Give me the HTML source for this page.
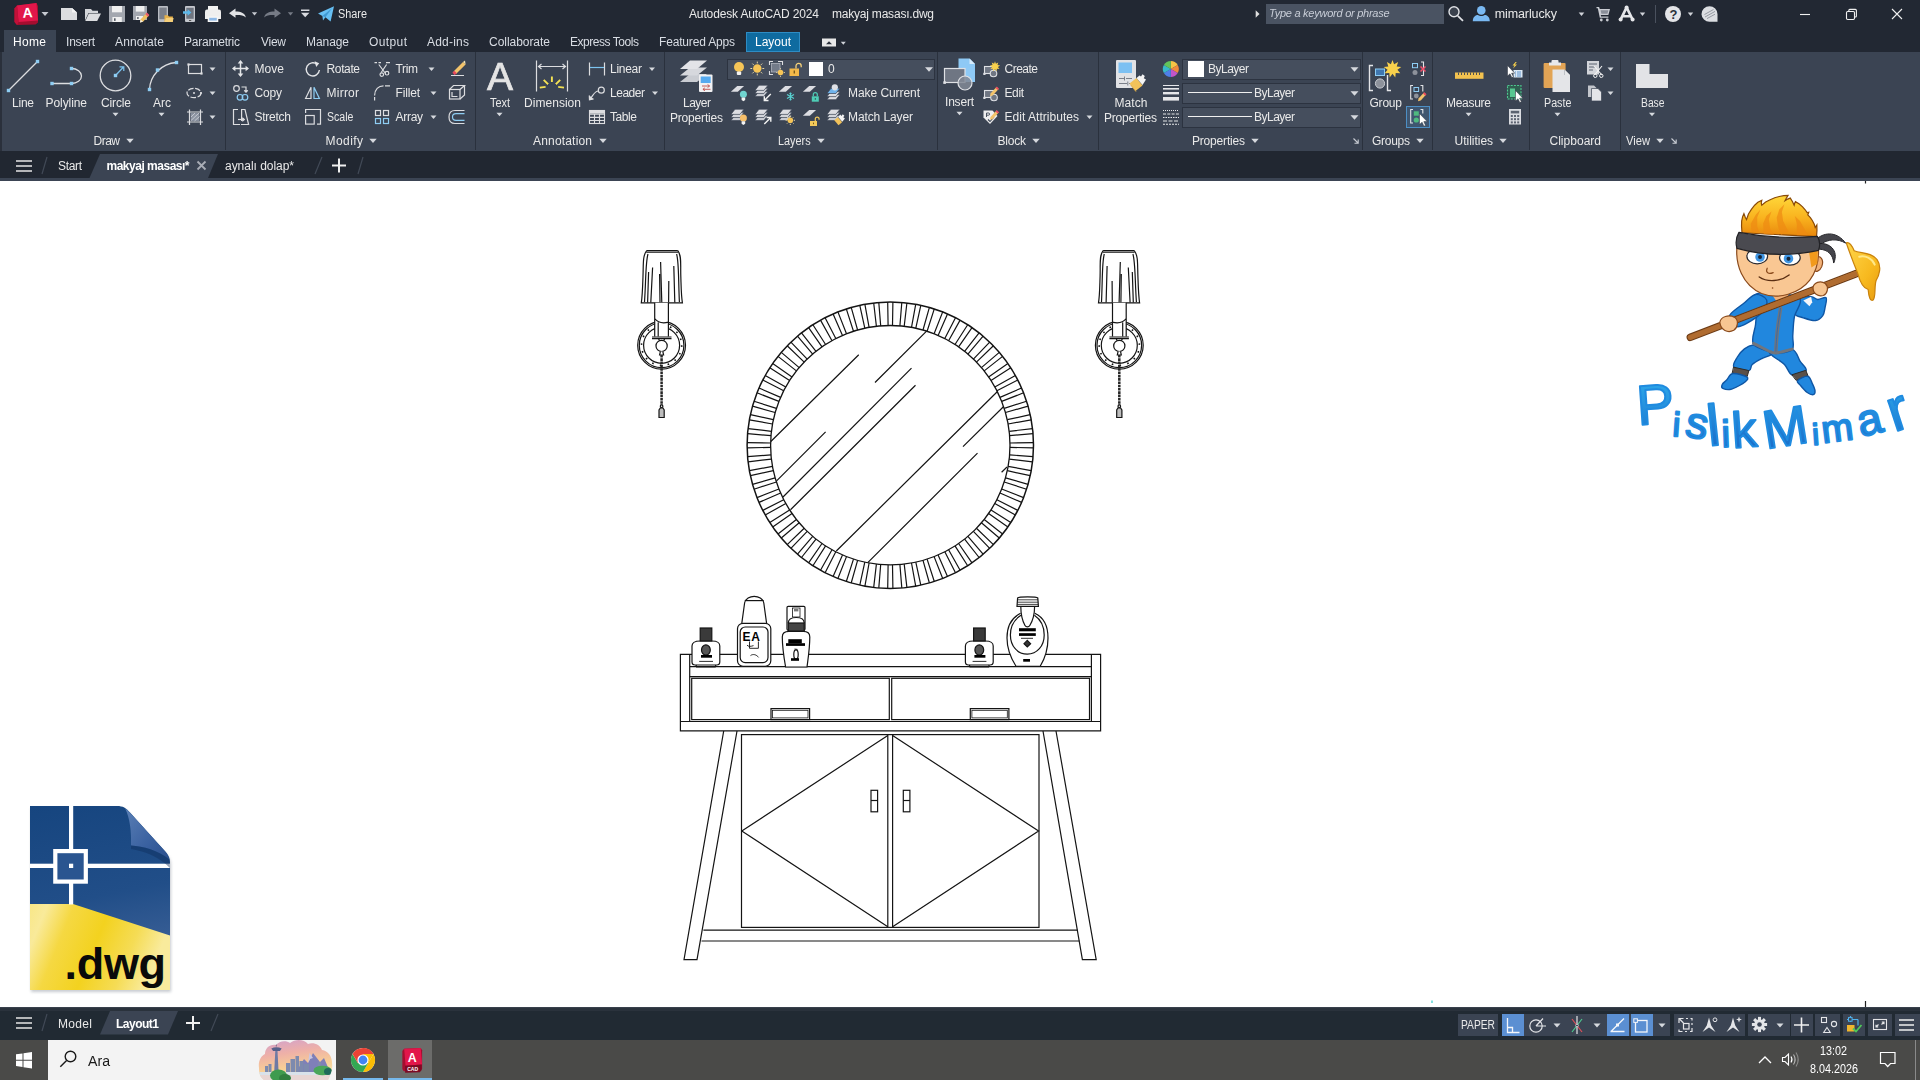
<!DOCTYPE html>
<html lang="tr">
<head>
<meta charset="utf-8">
<title>Autodesk AutoCAD 2024 - makyaj masası.dwg</title>
<style>
html,body{margin:0;padding:0;width:1920px;height:1080px;overflow:hidden;background:#fff;}
body{font-family:"Liberation Sans",sans-serif;font-size:12px;color:#e8e8e8;position:relative;}
.abs{position:absolute;}
#titlebar{position:absolute;left:0;top:0;width:1920px;height:30px;background:#222833;}
#tabrow{position:absolute;left:0;top:30px;width:1920px;height:22px;background:#222833;}
#ribbon{position:absolute;left:0;top:52px;width:1920px;height:99px;background:#3b4453;}
#filetabs{position:absolute;left:0;top:151px;width:1920px;height:27px;background:#212731;}
#filetabs-line{position:absolute;left:0;top:178px;width:1920px;height:3px;background:#3b4453;}
#canvas{position:absolute;left:0;top:181px;width:1920px;height:826px;background:#fff;}
#layoutbar{position:absolute;left:0;top:1007px;width:1920px;height:33px;background:#212a33;}
#taskbar{position:absolute;left:0;top:1040px;width:1920px;height:40px;background:#4a4a48;}
.t{position:absolute;white-space:nowrap;line-height:1;color:#e9e9e9;font-size:12px;}
.b{font-weight:bold;}
#texts{position:absolute;left:0;top:0;width:1920px;height:1080px;will-change:transform;}
.sep{position:absolute;top:52px;width:1px;height:98px;background:#2a313d;}
.dd{position:absolute;background:#454e5d;border:1px solid #2c3340;box-sizing:border-box;}
svg{position:absolute;left:0;top:0;overflow:visible;}
</style>
</head>
<body>
<div id="titlebar"></div>
<div id="tabrow"></div>
<div id="ribbon"></div>
<div id="filetabs"></div>
<div id="filetabs-line"></div>
<div id="canvas"></div>
<div id="layoutbar"></div>
<div id="taskbar"></div>
<!-- structural chrome shapes -->
<div class="abs" style="left:4px;top:30px;width:52px;height:22px;background:#3b4453;"></div>
<div class="abs" style="left:746px;top:32px;width:54px;height:20px;background:#0f6ba0;border:1px solid #2e8cc4;box-sizing:border-box;"></div>
<div class="abs" style="left:1266px;top:4px;width:178px;height:20px;background:#4a5362;"></div>
<div class="abs" style="left:0;top:52px;width:2px;height:99px;background:#2a303b;"></div>
<div class="sep" style="left:225px;"></div>
<div class="sep" style="left:475px;"></div>
<div class="sep" style="left:664px;"></div>
<div class="sep" style="left:937px;"></div>
<div class="sep" style="left:1098px;"></div>
<div class="sep" style="left:1362px;"></div>
<div class="sep" style="left:1432px;"></div>
<div class="sep" style="left:1529px;"></div>
<div class="sep" style="left:1620px;"></div>
<!-- dropdowns -->
<div class="dd" style="left:727px;top:59px;width:208px;height:21px;"></div>
<div class="dd" style="left:1182px;top:59px;width:179px;height:21px;"></div>
<div class="dd" style="left:1182px;top:83px;width:179px;height:21px;"></div>
<div class="dd" style="left:1182px;top:107px;width:179px;height:21px;"></div>
<div class="abs" style="left:809px;top:62px;width:14px;height:14px;background:#fff;"></div>
<div class="abs" style="left:1188px;top:61px;width:16px;height:16px;background:#fff;"></div>
<div class="abs" style="left:1188px;top:92px;width:64px;height:1px;background:#f0f0f0;"></div>
<div class="abs" style="left:1188px;top:116px;width:64px;height:1px;background:#f0f0f0;"></div>
<!-- group-select highlighted button -->
<div class="abs" style="left:1406px;top:106px;width:24px;height:22px;background:#3f5670;border:1px solid #4d8fc4;box-sizing:border-box;"></div>
<!-- status bar boxes -->
<div class="abs" style="left:1458px;top:1014px;width:40px;height:22px;background:#3b4453;"></div>
<div class="abs" style="left:1502px;top:1014px;width:168px;height:22px;background:#3b4453;"></div>
<div class="abs" style="left:1502px;top:1014px;width:22px;height:22px;background:#5b8fd2;"></div>
<div class="abs" style="left:1607px;top:1014px;width:22px;height:22px;background:#5b8fd2;"></div>
<div class="abs" style="left:1631px;top:1014px;width:22px;height:22px;background:#5b8fd2;"></div>
<div class="abs" style="left:1674px;top:1014px;width:71px;height:22px;background:#3b4453;"></div>
<div class="abs" style="left:1748px;top:1014px;width:42px;height:22px;background:#3b4453;"></div>
<div class="abs" style="left:1791px;top:1014px;width:22px;height:22px;background:#3b4453;"></div>
<div class="abs" style="left:1815px;top:1014px;width:25px;height:22px;background:#3b4453;"></div>
<div class="abs" style="left:1843px;top:1014px;width:22px;height:22px;background:#3b4453;"></div>
<div class="abs" style="left:1868px;top:1014px;width:24px;height:22px;background:#3b4453;"></div>
<div class="abs" style="left:1895px;top:1014px;width:25px;height:22px;background:#3b4453;"></div>
<!-- taskbar -->
<div class="abs" style="left:48px;top:1040px;width:288px;height:40px;background:#f3f3f3;"></div>
<div class="abs" style="left:388px;top:1040px;width:44px;height:40px;background:#6c6c6a;"></div>
<div class="abs" style="left:343px;top:1078px;width:40px;height:2px;background:#76b9ed;"></div>
<div class="abs" style="left:388px;top:1078px;width:44px;height:2px;background:#76b9ed;"></div>
<div class="abs" style="left:1915px;top:1040px;width:1px;height:40px;background:#8a8a8a;"></div>
<!-- file tab / layout tab polygons & misc lines -->
<svg width="1920" height="1080" viewBox="0 0 1920 1080">
<polygon points="89.5,178 100,154 218,154 208,178" fill="#3b4453"/>
<polygon points="100,1034.5 110,1011 178,1011 168,1034.5" fill="#3b4453"/>
<rect x="0" y="1007" width="1920" height="1.5" fill="#39414c"/><rect x="0" y="1008.5" width="1920" height="2.5" fill="#2a323c"/>
<!-- hamburger top -->
<g stroke="#e6e6e6" stroke-width="1.6">
<path d="M16 161h16M16 166h16M16 171h16"/>
<path d="M16 1018h16M16 1023h16M16 1028h16"/>
</g>
<g stroke="#414956" stroke-width="1.2">
<path d="M47 157L42 174M322 157L315 174M363 157L358 174"/>
<path d="M47 1014L42 1031M218 1014L211 1031"/>
</g>
<g stroke="#f0f0f0" stroke-width="2">
<path d="M332 165.5h14M339 158.5v14"/>
<path d="M186 1023h14M193 1016v14"/>
</g>
<path d="M197.5 161.5l8 8M205.5 161.5l-8 8" stroke="#a9adb6" stroke-width="1.8"/>
</svg>
<!-- CAD drawing: makyaj masası -->
<svg width="1920" height="1080" viewBox="0 0 1920 1080" fill="none" stroke="#141414" stroke-width="1.2" stroke-linecap="butt">
<g id="mirror">
<circle cx="890.3" cy="445.2" r="143.2" stroke-width="1.5"/><circle cx="890.3" cy="445.2" r="119.7" stroke-width="1.3"/>
<path d="M1010.0 443.0L1033.5 442.6M1010.0 447.4L1033.5 447.8M1009.6 454.8L1033.0 456.7M1009.2 459.1L1032.5 461.8M1008.1 466.4L1031.2 470.6M1007.3 470.7L1030.2 475.7M1005.5 477.9L1028.1 484.3M1004.2 482.0L1026.6 489.2M1001.7 489.0L1023.6 497.6M1000.0 493.0L1021.6 502.4M996.9 499.7L1017.8 510.4M994.8 503.5L1015.4 515.0M991.0 509.9L1010.8 522.6M988.6 513.5L1007.9 526.9M984.2 519.5L1002.6 534.0M981.4 522.8L999.3 538.0M976.4 528.3L993.4 544.6M973.4 531.3L989.7 548.3M967.9 536.3L983.1 554.2M964.6 539.1L979.1 557.5M958.6 543.5L972.0 562.8M955.0 545.9L967.7 565.7M948.6 549.7L960.1 570.3M944.8 551.8L955.5 572.7M938.1 554.9L947.5 576.5M934.1 556.6L942.7 578.5M927.1 559.1L934.3 581.5M923.0 560.4L929.4 583.0M915.8 562.2L920.8 585.1M911.5 563.0L915.7 586.1M904.2 564.1L906.9 587.4M899.9 564.5L901.8 587.9M892.5 564.9L892.9 588.4M888.1 564.9L887.7 588.4M880.7 564.5L878.8 587.9M876.4 564.1L873.7 587.4M869.1 563.0L864.9 586.1M864.8 562.2L859.8 585.1M857.6 560.4L851.2 583.0M853.5 559.1L846.3 581.5M846.5 556.6L837.9 578.5M842.5 554.9L833.1 576.5M835.8 551.8L825.1 572.7M832.0 549.7L820.5 570.3M825.6 545.9L812.9 565.7M822.0 543.5L808.6 562.8M816.0 539.1L801.5 557.5M812.7 536.3L797.5 554.2M807.2 531.3L790.9 548.3M804.2 528.3L787.2 544.6M799.2 522.8L781.3 538.0M796.4 519.5L778.0 534.0M792.0 513.5L772.7 526.9M789.6 509.9L769.8 522.6M785.8 503.5L765.2 515.0M783.7 499.7L762.8 510.4M780.6 493.0L759.0 502.4M778.9 489.0L757.0 497.6M776.4 482.0L754.0 489.2M775.1 477.9L752.5 484.3M773.3 470.7L750.4 475.7M772.5 466.4L749.4 470.6M771.4 459.1L748.1 461.8M771.0 454.8L747.6 456.7M770.6 447.4L747.1 447.8M770.6 443.0L747.1 442.6M771.0 435.6L747.6 433.7M771.4 431.3L748.1 428.6M772.5 424.0L749.4 419.8M773.3 419.7L750.4 414.7M775.1 412.5L752.5 406.1M776.4 408.4L754.0 401.2M778.9 401.4L757.0 392.8M780.6 397.4L759.0 388.0M783.7 390.7L762.8 380.0M785.8 386.9L765.2 375.4M789.6 380.5L769.8 367.8M792.0 376.9L772.7 363.5M796.4 370.9L778.0 356.4M799.2 367.6L781.3 352.4M804.2 362.1L787.2 345.8M807.2 359.1L790.9 342.1M812.7 354.1L797.5 336.2M816.0 351.3L801.5 332.9M822.0 346.9L808.6 327.6M825.6 344.5L812.9 324.7M832.0 340.7L820.5 320.1M835.8 338.6L825.1 317.7M842.5 335.5L833.1 313.9M846.5 333.8L837.9 311.9M853.5 331.3L846.3 308.9M857.6 330.0L851.2 307.4M864.8 328.2L859.8 305.3M869.1 327.4L864.9 304.3M876.4 326.3L873.7 303.0M880.7 325.9L878.8 302.5M888.1 325.5L887.7 302.0M892.5 325.5L892.9 302.0M899.9 325.9L901.8 302.5M904.2 326.3L906.9 303.0M911.5 327.4L915.7 304.3M915.8 328.2L920.8 305.3M923.0 330.0L929.4 307.4M927.1 331.3L934.3 308.9M934.1 333.8L942.7 311.9M938.1 335.5L947.5 313.9M944.8 338.6L955.5 317.7M948.6 340.7L960.1 320.1M955.0 344.5L967.7 324.7M958.6 346.9L972.0 327.6M964.6 351.3L979.1 332.9M967.9 354.1L983.1 336.2M973.4 359.1L989.7 342.1M976.4 362.1L993.4 345.8M981.4 367.6L999.3 352.4M984.2 370.9L1002.6 356.4M988.6 376.9L1007.9 363.5M991.0 380.5L1010.8 367.8M994.8 386.9L1015.4 375.4M996.9 390.7L1017.8 380.0M1000.0 397.4L1021.6 388.0M1001.7 401.4L1023.6 392.8M1004.2 408.4L1026.6 401.2M1005.5 412.5L1028.1 406.1M1007.3 419.7L1030.2 414.7M1008.1 424.0L1031.2 419.8M1009.2 431.3L1032.5 428.6M1009.6 435.6L1033.0 433.7"/>
<path d="M770.8 441.5L858.75 354.7M875 382.5L926.6 331.1M776.6 480.9L825.6 431.8M783 497L911.5 368.1M790.5 509.8L915.5 385.3M836.3 551L997.2 391.8M963 446.6L1003.4 406.8M868 562.4L977.5 453.1M1001.6 472.3L1007 467"/>
</g>
<g id="sconce-l"><path d="M646.7 250.5H677.8M646.2 252.2H678.3" /><path d="M646.7 250.5C642.5 256 643.5 264 643 276C642.6 288 642.4 296 641.3 302.8H682.4C681.2 296 681.2 288 680.8 276C680.4 264 681.8 256 677.8 250.5"/><path d="M648 254C645.5 262 646 280 644.5 302M676.6 254C679 262 678.3 280 679.4 302"/><path d="M648.6 272L647.6 302.5M652.6 267.5L650.8 302.5M660.6 262L661.8 302.5M659.6 274L660 302.5M668.8 281L668.6 302.5M673.8 266L674.8 302.5"/><circle cx="661.6" cy="345.3" r="23.9"/><circle cx="661.6" cy="345.3" r="22.3"/><circle cx="661.6" cy="345.3" r="18"/><circle cx="661.6" cy="345.3" r="20.1" stroke-dasharray="1.6 6.3" stroke-width="1.6"/><path d="M654.7 302.8V336.5H668.4V302.8Z" fill="#fff" stroke="none"/><path d="M654.7 302.8V336.5M668.4 302.8V336.5M658.2 322.5V336.5M654.7 318.5C657 321.5 662 323.8 668.4 322.2"/><path d="M652 337H671.5M652 338.6H671.5" /><path d="M658.5 338.6L659.6 341H663.6L664.7 338.6" /><circle cx="661.6" cy="345.9" r="5.6" fill="#fff"/><path d="M660.4 351.4L659.6 355H663.6L662.8 351.4" fill="#fff"/><path d="M661.6 355V405" stroke-width="2.5" stroke-dasharray="2.6 0.7" stroke="#262626"/><circle cx="661.6" cy="406.2" r="1.3"/><path d="M659 417.5V410L660.4 407.8H662.8L664.2 410V417.5Z" fill="#bdbdbd"/></g>
<g id="sconce-r" transform="translate(1780.9 0) scale(-1 1)"><path d="M646.7 250.5H677.8M646.2 252.2H678.3" /><path d="M646.7 250.5C642.5 256 643.5 264 643 276C642.6 288 642.4 296 641.3 302.8H682.4C681.2 296 681.2 288 680.8 276C680.4 264 681.8 256 677.8 250.5"/><path d="M648 254C645.5 262 646 280 644.5 302M676.6 254C679 262 678.3 280 679.4 302"/><path d="M648.6 272L647.6 302.5M652.6 267.5L650.8 302.5M660.6 262L661.8 302.5M659.6 274L660 302.5M668.8 281L668.6 302.5M673.8 266L674.8 302.5"/><circle cx="661.6" cy="345.3" r="23.9"/><circle cx="661.6" cy="345.3" r="22.3"/><circle cx="661.6" cy="345.3" r="18"/><circle cx="661.6" cy="345.3" r="20.1" stroke-dasharray="1.6 6.3" stroke-width="1.6"/><path d="M654.7 302.8V336.5H668.4V302.8Z" fill="#fff" stroke="none"/><path d="M654.7 302.8V336.5M668.4 302.8V336.5M658.2 322.5V336.5M654.7 318.5C657 321.5 662 323.8 668.4 322.2"/><path d="M652 337H671.5M652 338.6H671.5" /><path d="M658.5 338.6L659.6 341H663.6L664.7 338.6" /><circle cx="661.6" cy="345.9" r="5.6" fill="#fff"/><path d="M660.4 351.4L659.6 355H663.6L662.8 351.4" fill="#fff"/><path d="M661.6 355V405" stroke-width="2.5" stroke-dasharray="2.6 0.7" stroke="#262626"/><circle cx="661.6" cy="406.2" r="1.3"/><path d="M659 417.5V410L660.4 407.8H662.8L664.2 410V417.5Z" fill="#bdbdbd"/></g>
<g id="table">
<path d="M680.4 654.3H1100.6V730.8H680.4Z"/>
<path d="M689.7 654.3V721.4M1091.4 654.3V721.4M689.7 666.7H1091.4M680.4 721.5H1100.6"/>
<path d="M689.7 676.7H1091.4"/>
<rect x="691.7" y="678.3" width="197.6" height="41.3"/><rect x="891.7" y="678.3" width="197.8" height="41.3"/>
<rect x="771" y="708.6" width="38.6" height="11"/><rect x="772.6" y="710.3" width="35.4" height="7.6" stroke-width="0.8"/>
<rect x="970.3" y="708.6" width="38.6" height="11"/><rect x="971.9" y="710.3" width="35.4" height="7.6" stroke-width="0.8"/>
<path d="M723.7 731L684 959.6H697L737 731M1056 731L1096.2 959.6H1082.4L1043 731"/>
<rect x="741.5" y="734.6" width="297.5" height="192.8"/>
<path d="M887.8 734.8V927.4M892.6 734.8V927.4"/>
<path d="M887.8 735.5L741.8 831L887.8 926.8M892.6 735.5L1038.6 831L892.6 926.8"/>
<rect x="871" y="790.3" width="6.6" height="21.5"/><path d="M871 800.5H877.6"/>
<rect x="903.3" y="790.3" width="6.6" height="21.5"/><path d="M903.3 800.5H909.9"/>
<path d="M703.4 930.2H1077.6M701.5 941H1079.5"/>
</g>
<g id="bottles">
<path d="M692 646C692 642.5 694 641 700.2 641H711.8C718 641 719.8 642.5 719.8 646V662C719.8 664 718.6 665 716.6 665H695.2C693.2 665 692 664 692 662Z" fill="#fff"/><path d="M696 665L696.6 667H715.2L715.8 665"/><rect x="700.2" y="628" width="11.6" height="13" fill="#3a3a3a"/><ellipse cx="705.9" cy="650" rx="4.4" ry="5.2" fill="#555"/><rect x="701" y="655" width="11" height="2.7" fill="#000" stroke="none"/><path d="M699.2 661.4H713" stroke-width="0.9"/>
<path d="M965.4 646C965.4 642.5 967.4 641 973.6 641H985.1999999999999C991.4 641 993.1999999999999 642.5 993.1999999999999 646V662C993.1999999999999 664 992.0 665 990.0 665H968.6C966.6 665 965.4 664 965.4 662Z" fill="#fff"/><path d="M969.4 665L970.0 667H988.6L989.1999999999999 665"/><rect x="973.6" y="628" width="11.6" height="13" fill="#3a3a3a"/><ellipse cx="979.3" cy="650" rx="4.4" ry="5.2" fill="#555"/><rect x="974.4" y="655" width="11" height="2.7" fill="#000" stroke="none"/><path d="M972.6 661.4H986.4" stroke-width="0.9"/>
<path d="M741.8 623.3L744.6 603C745.4 598.5 750 596.3 754.2 596.3C758.4 596.3 763 598.5 763.8 603L766.6 623.3" fill="#fff"/>
<path d="M744.8 600.6H763.6"/>
<rect x="737.5" y="623.3" width="33.3" height="43" rx="5.5" fill="#fff"/>
<rect x="740.2" y="627" width="27.8" height="35.6" rx="5"/>
<path d="M749.5 641.5V648.3H758.4V641.5M747 645.2C748.5 646.8 751 646.5 753.5 645.6M750.5 655.6C753 653.6 756.5 654.6 758.6 657.4" stroke-width="0.9"/>
<rect x="787" y="606.3" width="18" height="24" rx="1.2" fill="#fff"/>
<rect x="792.5" y="608" width="7.5" height="9" stroke-width="0.8"/><rect x="794" y="609" width="4.4" height="2.4" fill="#777" stroke="none"/>
<path d="M788.3 623C788.3 619.5 791.5 617.5 796.2 617.5C800.9 617.5 804.2 619.5 804.2 623" />
<rect x="788.3" y="623" width="15.9" height="8.3" fill="#444"/>
<path d="M782.3 637C782.3 633.5 785 631.3 789 631.3H803.2C807.2 631.3 809.8 633.5 809.8 637C809.8 648 808.2 658 807 667H785.6C784 658 782.3 648 782.3 637Z" fill="#fff"/>
<rect x="788.3" y="639.2" width="13.5" height="4.2" fill="#000" stroke="none"/><rect x="786" y="643.2" width="19" height="2.7" fill="#000" stroke="none"/>
<ellipse cx="796" cy="654.5" rx="2.2" ry="4.6" stroke-width="1.2"/><path d="M794.5 649L797.5 649.4" stroke-width="0.8"/>
<rect x="791" y="658.2" width="8" height="2.6" fill="#000" stroke="none"/>
<path d="M1020.6 613.3C1011 618 1007 628 1007 638C1007 650 1012 660 1016 666.3H1040.2C1044 660 1048 650 1048 638C1048 628 1045 618 1034.8 613.3" fill="#fff"/>
<path d="M1021 615.2C1013.5 620 1010.4 628 1010.4 635C1010.4 646 1017.5 654.2 1027.3 654.2C1037 654.2 1044.2 646 1044.2 635C1044.2 628 1041.5 620 1034.4 615.2"/>
<path d="M1020.8 606.3C1020.8 616 1023 622 1025 625.5C1026 627.3 1028.8 627.3 1029.8 625.5C1032 622 1034.6 616 1034.6 606.3" fill="#fff"/>
<path d="M1017.6 598C1019 596.6 1036.4 596.6 1037.8 598L1038.4 606.3H1017Z" fill="#fff"/><path d="M1017.4 599.8H1038M1017.3 602.2H1038.2M1017.2 604.4H1038.3" stroke-width="0.8"/>
<rect x="1019" y="628.2" width="16.8" height="3.1" fill="#000" stroke="none"/><rect x="1019" y="633.2" width="16.8" height="2.7" fill="#000" stroke="none"/>
<path d="M1021 638.3H1033" stroke-width="0.9"/><path d="M1027.3 640.4L1030.6 643.7L1027.3 647L1024 643.7Z" fill="#333"/>
<rect x="1023.2" y="659" width="6.8" height="2.7" fill="#000" stroke="none"/>
</g>
<text x="742.6" y="641.4" font-family="Liberation Sans, sans-serif" font-weight="bold" font-size="12" fill="#000" stroke="none" letter-spacing="0.6">EA</text>
<path d="M1865.5 181V183.5M1865.5 1001V1007" stroke="#222"/><path d="M1432 1000.5V1003" stroke="#3cc" />
</svg>
<!-- .dwg file icon -->
<svg width="1920" height="1080" viewBox="0 0 1920 1080">
<defs>
<linearGradient id="dwgBlue" x1="0" y1="0" x2="0.150" y2="1"><stop offset="0" stop-color="#16457f"/><stop offset="0.550" stop-color="#214e88"/><stop offset="1" stop-color="#42659b"/></linearGradient>
<linearGradient id="dwgYel" x1="0" y1="0" x2="1" y2="0.250"><stop offset="0" stop-color="#f8e787"/><stop offset="0.120" stop-color="#f9ea9a"/><stop offset="0.300" stop-color="#f5d842"/><stop offset="0.550" stop-color="#f3d21f"/><stop offset="0.800" stop-color="#f5dc55"/><stop offset="1" stop-color="#f9eb9c"/></linearGradient>
<linearGradient id="dwgFold" x1="0" y1="0" x2="1" y2="1"><stop offset="0" stop-color="#5a7fb5"/><stop offset="0.600" stop-color="#3a61a0"/><stop offset="1" stop-color="#2a4f8c"/></linearGradient>
<filter id="dwgSh" x="-10%" y="-10%" width="120%" height="120%"><feGaussianBlur stdDeviation="1.800"/></filter>
<clipPath id="dwgClip"><path d="M30 806H117C123 806 126 808 130 812.500L164 850C168 854.500 170 857 170 863V990H30Z"/></clipPath>
</defs>
<path d="M31 808H117C123 808 126 810 130 814.500L164 852C168 856.500 171 859 171 865V992H31Z" fill="#9aa0aa" opacity="0.550" filter="url(#dwgSh)"/>
<g clip-path="url(#dwgClip)">
<rect x="30" y="806" width="140" height="184" fill="url(#dwgBlue)"/>
<path d="M30 904H73L170 935.500V990H30Z" fill="url(#dwgYel)"/>
<rect x="69" y="806" width="4.200" height="98.500" fill="#fff"/>
<rect x="30" y="863.700" width="140" height="4.300" fill="#fff"/>
<rect x="55.300" y="851.100" width="30.500" height="30.500" fill="#2a5590" stroke="#fff" stroke-width="4.200"/>
<rect x="69" y="863.700" width="4.200" height="4.300" fill="#fff"/>
<path d="M125 808C130 818 131.500 832 131 845.500C143 846.500 158 850 169.500 859.500C168 855 166 852.500 164 850L130 812.500C128.500 811 127 809.500 125 808Z" fill="url(#dwgFold)"/>
<path d="M131 845.500C143 846.500 158 850 169.500 859.500L170 868C158 856 144 851 131 849Z" fill="#0f2f5e" opacity="0.450"/>
</g>
<text x="64.500" y="978.700" font-family="Liberation Sans, sans-serif" font-weight="bold" font-size="45" letter-spacing="-0.300" fill="#0a0a0a">.dwg</text>
</svg>
<!-- Pislik Mimar mascot logo -->
<svg width="1920" height="1080" viewBox="0 0 1920 1080">
<defs>
<linearGradient id="hairG" x1="0" y1="0" x2="0" y2="1"><stop offset="0" stop-color="#ffd83a"/><stop offset="0.550" stop-color="#f9b21e"/><stop offset="1" stop-color="#e8860c"/></linearGradient>
<linearGradient id="blobG" x1="0" y1="0" x2="1" y2="1"><stop offset="0" stop-color="#ffd64a"/><stop offset="0.600" stop-color="#f7b91f"/><stop offset="1" stop-color="#e79a10"/></linearGradient>
<linearGradient id="txtG" x1="0" y1="0" x2="0" y2="1"><stop offset="0" stop-color="#2fb0ee"/><stop offset="1" stop-color="#1763c4"/></linearGradient>
<linearGradient id="stickG" x1="0" y1="0" x2="0" y2="1"><stop offset="0" stop-color="#c07a3a"/><stop offset="1" stop-color="#8a4f20"/></linearGradient>
</defs>
<g transform="translate(1680 185) scale(0.19909)" stroke-linejoin="round" stroke-linecap="round">
<!-- body (legs, arms, torso) -->
<path d="M368.3 803.7C346.0 805.6 337.2 813.0 323.7 823.2C310.2 833.4 296.2 849.8 287.4 865.1C278.6 880.5 260.9 904.1 270.7 915.3C280.5 926.5 330.6 934.4 346.0 932.1C361.4 929.8 351.6 911.6 362.8 901.4C374.0 891.2 396.3 879.6 413.0 870.7C429.7 861.9 455.8 858.1 463.2 848.3C470.6 838.5 473.4 819.5 457.6 812.1C441.8 804.7 390.6 801.9 368.3 803.7Z" fill="#2187de" stroke="#0f56a4" stroke-width="7"/>
<path d="M457.6 834.4C474.4 829.3 539.5 817.6 563.7 826.0C587.9 834.4 591.2 866.9 602.8 884.6C614.4 902.3 639.9 920.5 633.4 932.1C626.9 943.7 581.8 959.5 563.7 954.4C545.6 949.3 541.4 917.7 524.6 901.4C507.9 885.1 474.4 867.9 463.2 856.7C452.0 845.5 440.9 839.5 457.6 834.4Z" fill="#2187de" stroke="#0f56a4" stroke-width="7"/>
<path d="M270.7 915.3L346.0 932.1L337.7 961.6L264.0 944.9Z" fill="#5a5048" stroke="#2e2a26" stroke-width="5"/>
<path d="M563.7 952.7L631.8 930.9L642.9 958.3L584.9 980.6Z" fill="#5a5048" stroke="#2e2a26" stroke-width="5"/>
<path d="M265.1 947.1C281.9 944.5 324.4 957.1 334.9 963.9C345.4 970.7 340.8 977.7 328.2 987.9C315.6 998.1 278.4 1019.7 259.5 1025.3C240.6 1030.9 222.8 1025.2 214.9 1021.3C207.0 1017.4 208.8 1008.8 212.1 1001.8C215.3 994.8 225.6 988.6 234.4 979.5C243.2 970.4 248.4 949.7 265.1 947.1Z" fill="#2187de" stroke="#0f56a4" stroke-width="7"/>
<path d="M590.5 982.3C596.5 974.5 629.5 958.2 641.8 960.5C654.1 962.8 658.0 984.2 664.1 996.2C670.2 1008.2 677.2 1023.0 678.1 1032.5C679.0 1042.0 676.2 1051.6 669.7 1053.2C663.2 1054.8 649.7 1049.6 639.0 1042.0C628.3 1034.4 613.6 1017.4 605.5 1007.4C597.4 997.4 584.5 990.1 590.5 982.3Z" fill="#2187de" stroke="#0f56a4" stroke-width="7"/>
<path d="M591.6 572.1C605.6 558.1 641.9 560.4 658.6 560.9C675.3 561.4 679.5 574.0 692.0 574.9C704.5 575.8 727.9 559.5 733.9 566.5C739.9 573.5 731.1 601.8 728.3 616.7C725.5 631.6 725.1 645.1 717.2 655.8C709.3 666.5 697.2 679.0 680.9 680.9C664.6 682.8 637.2 673.0 619.5 667.0C601.8 661.0 579.4 660.4 574.8 644.6C570.1 628.8 577.6 586.1 591.6 572.1Z" fill="#2187de" stroke="#0f56a4" stroke-width="7"/>
<path d="M619.5 580.4L658.6 560.9L664.1 588.8L650.2 608.4Z" fill="#f4f6fa"/>
<path d="M379.5 549.8C397.2 537.7 453.9 540.5 491.1 544.2C528.3 547.9 588.8 552.6 602.8 572.1C616.8 591.6 580.8 630.7 574.8 661.4C568.8 692.1 568.4 728.8 566.5 756.2C564.6 783.6 576.3 811.1 563.7 826.0C551.1 840.9 508.8 843.2 491.1 845.5C473.4 847.8 478.1 847.9 457.6 840.0C437.1 832.1 381.3 821.4 368.3 798.1C355.3 774.8 376.7 730.6 379.5 700.4C382.3 670.2 385.1 641.8 385.1 616.7C385.1 591.6 361.8 561.9 379.5 549.8Z" fill="#2187de" stroke="#0f56a4" stroke-width="7"/>
<path d="M457.6 544.2L502.3 611.1L546.9 549.8Z" fill="#f2b27a"/>
<path d="M505.1 619.5C502.8 634.9 494.4 687.0 491.1 711.6C487.8 736.2 487.2 746.5 485.5 767.4C483.8 788.3 481.8 825.6 481.1 837.2" fill="none" stroke="#70757d" stroke-width="18"/>
<path d="M505.1 619.5C502.8 634.9 494.4 687.0 491.1 711.6C487.8 736.2 487.2 746.5 485.5 767.4C483.8 788.3 481.8 825.6 481.1 837.2" fill="none" stroke="#2b66b0" stroke-width="4"/>
<path d="M369.5 795.3C376.8 799.0 398.3 810.4 413.0 817.6C427.7 824.9 444.6 834.6 457.6 838.8C470.6 843.0 473.4 845.2 491.1 842.8C508.8 840.4 551.6 827.4 563.7 824.3" fill="none" stroke="#70757d" stroke-width="15"/>
<path d="M379.5 549.8C360.9 552.1 344.2 575.8 323.7 591.6C303.2 607.4 269.2 630.2 256.7 644.6C244.1 659.0 243.8 666.9 248.4 678.1C253.1 689.3 270.2 708.8 284.6 711.6C299.0 714.4 313.5 707.0 334.9 694.9C356.3 682.8 396.3 658.5 413.0 639.0C429.7 619.5 440.9 592.6 435.3 577.7C429.7 562.8 398.1 547.5 379.5 549.8Z" fill="#2187de" stroke="#0f56a4" stroke-width="7"/>
<!-- staff -->
<path d="M52 765L885 445" stroke="#6b3a14" stroke-width="38" fill="none"/>
<path d="M52 765L885 445" stroke="url(#stickG)" stroke-width="28" fill="none"/>
<path d="M52 765L885 445" stroke="#b06c30" stroke-width="26" fill="none"/>
<!-- hands -->
<path d="M200 690C205 660 245 650 275 665C295 680 292 715 270 730C240 745 205 730 200 690Z" fill="#f7c591" stroke="#8a4a1c" stroke-width="6"/>
<path d="M668 515C672 490 705 478 730 495C748 512 742 545 720 555C692 562 668 545 668 515Z" fill="#f7c591" stroke="#8a4a1c" stroke-width="6"/>
<!-- slime blob -->
<path d="M835 290C850 285 862 300 875 330C905 345 960 335 990 375C1015 410 1000 455 985 480C975 510 985 560 970 578C955 585 948 560 945 525C925 520 905 490 893 445C875 400 855 350 835 290Z" fill="url(#blobG)" stroke="#c9820c" stroke-width="6"/>
<path d="M900 360C930 352 965 368 978 400" fill="none" stroke="#ffe88a" stroke-width="10"/>
<!-- headband tails -->
<path d="M690 268C730 235 790 235 832 292C790 268 745 270 700 300Z" fill="#45454b" stroke="#222226" stroke-width="5"/>
<path d="M695 295C750 285 800 330 772 392C768 350 745 325 700 322Z" fill="#45454b" stroke="#222226" stroke-width="5"/>
<!-- ear + face -->
<path d="M680 365C705 350 725 375 712 410C702 435 680 440 672 425Z" fill="#f2b27a" stroke="#8a4a1c" stroke-width="6"/>
<path d="M287 300C275 400 315 505 410 545C495 578 600 545 652 478C692 425 700 360 694 300Z" fill="#f9c793" stroke="#8a4a1c" stroke-width="6"/>
<path d="M648 335L692 330L690 395L660 415Z" fill="#f29a1c"/>
<!-- eyes -->
<ellipse cx="388" cy="358" rx="52" ry="38" fill="#fff" stroke="#2a2a30" stroke-width="6"/>
<ellipse cx="552" cy="366" rx="52" ry="36" fill="#fff" stroke="#2a2a30" stroke-width="6"/>
<circle cx="402" cy="362" r="24" fill="#3f95e2"/><circle cx="402" cy="362" r="10" fill="#16263a"/>
<circle cx="545" cy="370" r="24" fill="#3f95e2"/><circle cx="545" cy="370" r="10" fill="#16263a"/>
<!-- nose, smile -->
<path d="M438 418C428 440 445 450 468 440" fill="none" stroke="#8a4a1c" stroke-width="6"/>
<path d="M398 462C440 490 505 485 548 452" fill="none" stroke="#5a2e12" stroke-width="7"/>
<circle cx="465" cy="517" r="4" fill="#8a4a1c"/>
<!-- hair -->
<path d="M311.4 240.0L309.1 207.4L309.7 181.4L314.6 158.6L321.1 143.9L327.7 161.8L334.2 173.2L343.9 145.5L358.6 122.8L374.9 101.6L391.1 87.0L410.7 77.2L408.1 90.2L410.7 101.6L430.2 85.3L453.0 73.9L475.8 64.2L498.6 57.7L521.3 53.7L542.5 52.8L534.4 65.8L527.9 78.8L540.9 70.7L553.9 65.8L565.3 83.7L573.4 101.6L576.0 91.8L579.9 83.7L599.5 95.1L615.8 109.7L628.8 124.4L638.5 139.0L646.7 137.4L641.8 150.4L654.8 163.5L664.6 178.1L674.4 197.6L679.2 213.9L687.4 200.9L688.0 226.9L685.7 259.5Z" fill="url(#hairG)" stroke="#8a4a08" stroke-width="6" stroke-linejoin="miter"/>
<path d="M358.6 233.4L355.3 194.4L381.4 148.8L404.2 122.8L387.9 161.8L387.9 207.4L397.6 240.0ZM420.4 246.5L417.2 194.4L433.5 155.3L459.5 132.5L446.5 171.6L453.0 220.4L472.5 249.7ZM508.3 249.7L492.0 207.4L485.5 165.1L498.6 122.8L524.6 96.7L511.6 135.8L518.1 181.4L544.1 233.4ZM586.5 253.0L586.5 194.4L576.7 155.3L602.7 181.4L625.5 220.4L641.8 253.0Z" fill="#ee8a12" opacity="0.7"/>
<!-- headband -->
<path d="M296 238C420 262 560 268 690 258C704 280 704 305 696 328C560 358 420 355 286 318C278 290 282 262 296 238Z" fill="#4a4a50" stroke="#222226" stroke-width="6"/>
</g>
<!-- handwritten brand text -->
<text font-family="Liberation Sans, sans-serif" font-weight="normal" fill="url(#txtG)" stroke="#1f8be0" stroke-width="2" stroke-linejoin="round"><tspan x="1638" y="425" font-size="56" rotate="-4">P</tspan><tspan x="1672" y="436" font-size="34" rotate="4">i</tspan><tspan x="1684" y="436" font-size="44" rotate="10">s</tspan><tspan x="1709" y="446" font-size="58" rotate="-6">l</tspan><tspan x="1722" y="447" font-size="38" rotate="-2">i</tspan><tspan x="1733" y="448" font-size="50" rotate="-4">k</tspan></text>
<text font-family="Liberation Sans, sans-serif" font-weight="normal" fill="url(#txtG)" stroke="#1f8be0" stroke-width="2" stroke-linejoin="round"><tspan x="1766" y="449" font-size="54" rotate="-9">M</tspan><tspan x="1813" y="445" font-size="30" rotate="-4">i</tspan><tspan x="1823" y="443" font-size="38" rotate="-7">m</tspan><tspan x="1861" y="437" font-size="44" rotate="-14">a</tspan><tspan x="1894" y="432" font-size="60" rotate="-18">r</tspan></text>
</svg>
<!-- title bar icons -->
<svg width="1920" height="30" viewBox="0 0 1920 30">
<!-- app logo -->
<g>
<path d="M14.5 8.5L17 5.5L36.5 3L38 6V22.5L35.5 24.5L17 25L14.5 22Z" fill="#a50d2f"/>
<path d="M17 5.5L36.5 3L38 20.5L18.5 22Z" fill="#e2164a"/>
<path d="M14.5 8.5L17 5.5L18.5 22L17 25L14.5 22Z" fill="#c11139"/>
<text x="22.6" y="17.6" font-family="Liberation Sans, sans-serif" font-weight="bold" font-size="14" fill="#fff" transform="rotate(-3 28 13)">A</text>
</g>
<path d="M41.5 12h7l-3.5 4z" fill="#c6cad1"/>
<!-- new -->
<path d="M61 8h11l5 4.5V20H61z" fill="#dcdde0"/><path d="M72 8v4.5h5z" fill="#f4f4f4"/>
<!-- open -->
<path d="M85 9h6l1.5 1.8H98V13H88.5L85 20.5z" fill="#d4d6da"/><path d="M88.8 13.6H101L97.2 21H85.3z" fill="#dcdde0"/>
<!-- save -->
<g><rect x="109" y="6" width="16" height="16" fill="#a3a7af"/><rect x="112" y="6" width="10" height="6.3" fill="#f0f0f0"/><rect x="112.4" y="17" width="9.4" height="5" fill="#f0f0f0"/><rect x="114" y="18.3" width="1.6" height="2.6" fill="#555b66"/></g>
<!-- save as -->
<g><rect x="133" y="6" width="14" height="14" fill="#a3a7af"/><rect x="135.8" y="6" width="8.6" height="5.6" fill="#f0f0f0"/><rect x="136" y="16" width="7" height="4" fill="#f0f0f0"/><rect x="137.2" y="17" width="1.4" height="2" fill="#555b66"/>
<path d="M140.5 19.5L146.5 13L149 15.4L143 21.8L140 22.5z" fill="#f0c060"/><path d="M145.3 14.3L146.9 12.6L149.4 15L147.8 16.7z" fill="#e65a6a"/><path d="M140.5 19.5L143 21.8L140 22.5z" fill="#f5f0e6"/></g>
<!-- mobile + folder -->
<g><rect x="158" y="6" width="10" height="16" rx="1" fill="#b9bcc3"/><rect x="159.3" y="7.6" width="7.4" height="11.6" fill="#7b808a"/>
<path d="M164.5 15.2h3.4l1 1.2h4V22h-8.4z" fill="#e8b24a"/><path d="M166 18h7.6L172.6 22H164.5z" fill="#f5cf7a"/></g>
<!-- phone arrow -->
<g><rect x="185" y="6" width="10" height="16" rx="1" fill="#c3c6cc"/><rect x="186.3" y="7.8" width="7.4" height="11" fill="#6f7580"/><rect x="189" y="20" width="2.2" height="1" fill="#555"/>
<path d="M183 11.3h4.6V9.2l3.8 3.3-3.8 3.3v-2.1H183z" fill="#5cb8ea"/></g>
<!-- print -->
<g><rect x="208" y="6" width="10" height="5.5" fill="#f4f4f4"/><path d="M205 11.5q0-2 2-2h12q2 0 2 2V19h-16z" fill="#eeeeee"/><rect x="207.7" y="16.4" width="10.6" height="5.6" fill="#f6f6f6"/><rect x="209.2" y="17.8" width="7.6" height="2.8" fill="#8db8e6"/></g>
<!-- undo -->
<path d="M229 13.2L235.5 8.6V11.4C241 11.4 245.2 13 245.8 17.6C243.6 15.2 240.5 14.8 235.5 14.9V17.8z" fill="#e2e3e6"/>
<path d="M251.8 12.3h5.4l-2.7 3.2z" fill="#c6cad1"/>
<!-- redo (disabled) -->
<path d="M281 13.2L274.5 8.6V11.4C269 11.4 264.8 13 264.2 17.6C266.4 15.2 269.5 14.8 274.5 14.9V17.8z" fill="#767b86"/>
<path d="M287.8 12.3h5.4l-2.7 3.2z" fill="#767b86"/>
<!-- customize QAT -->
<path d="M301 9.6h8.4v1.5H301zM301 12.8h8.4l-4.2 4.4z" fill="#d8dadf"/>
<!-- share plane -->
<path d="M318 13.5L334 6.2L330.6 21.4L325.4 17.3L323 20.4L322.4 16z" fill="#67bff3"/><path d="M322.4 16L332 8.2L325.4 17.3" fill="#3f98d2"/>
<!-- search expander -->
<path d="M1255.7 10.3l3.8 3.7-3.8 3.7z" fill="#e0e0e0"/>
<!-- magnifier -->
<g fill="none" stroke="#e0e2e6" stroke-width="1.4"><circle cx="1454" cy="11.8" r="5" fill="#3a414d"/><path d="M1457.8 15.8L1463 20.8" stroke-width="1.8"/></g>
<!-- user -->
<g fill="#7ab9f2"><circle cx="1481.3" cy="10.4" r="4.3"/><path d="M1472.8 21.2c0-4.4 3-6.2 5.2-6.2c1.6 1.4 5 1.4 6.6 0c2.2 0 5.2 1.8 5.2 6.2z"/></g>
<path d="M1578.7 12.6h5.6l-2.8 3.3z" fill="#d0d3d9"/>
<!-- cart -->
<g fill="#c9ccd2"><path d="M1596.5 7h2.6l.7 1.9h10.2l-1.6 6.2h-7.6l.3 1.4h7.3v1.3h-8.6l-2-9.5h-1.3z"/><circle cx="1601.3" cy="20" r="1.4"/><circle cx="1607.3" cy="20" r="1.4"/></g>
<path d="M1600.6 10.2h7.8l-.9 3.6h-6.1z" fill="#8a8f99"/>
<!-- autodesk A -->
<g stroke="#e6e7ea" stroke-width="2.6" fill="none" stroke-linecap="round" stroke-linejoin="round"><path d="M1620.6 19.6L1626.6 7.4L1632.6 19.6M1622.6 16.2H1630.6"/></g>
<g fill="#e6e7ea"><circle cx="1626.6" cy="7.6" r="2"/><circle cx="1620.6" cy="19.4" r="2"/><circle cx="1632.6" cy="19.4" r="2"/></g>
<path d="M1639.8 12.6h5.4l-2.7 3.3z" fill="#d0d3d9"/>
<rect x="1655" y="5" width="1" height="18" fill="#4a515e"/>
<!-- help -->
<circle cx="1673" cy="14" r="8" fill="#e4e5e8"/>
<text x="1669.6" y="18.6" font-family="Liberation Sans, sans-serif" font-weight="bold" font-size="13" fill="#2a303b">?</text>
<path d="M1687.8 12.6h5.4l-2.7 3.3z" fill="#d0d3d9"/>
<!-- chat bubble -->
<path d="M1701.5 14.2a8 8 0 1 1 16 0v7.6h-8a8 8 0 0 1-8-7.6z" fill="#dcdee2"/>
<g stroke="#8d929b" stroke-width="0.9"><path d="M1704.5 14.5l9-5M1705 17l10-5.6M1707 18.6l8-4.4"/></g>
<!-- window controls -->
<g stroke="#f0f0f0" stroke-width="1.1" fill="none"><path d="M1800 14.5h10"/><rect x="1846.5" y="11.5" width="8" height="8" rx="1.2"/><path d="M1848.8 11.3V10.4q0-1 1-1h5.6q1 0 1 1v5.6q0 1-1 1h-.8"/><path d="M1892 9l10 10M1902 9l-10 10"/></g>
<!-- ribbon minimize toggle -->
<rect x="822" y="38.5" width="14" height="8" fill="#e8e8e8"/><path d="M826 44.2l3-3 3 3z" fill="#2a303b"/><path d="M840.8 41.8h5l-2.5 3z" fill="#d0d3d9"/>
</svg>
<!-- ribbon icons: Draw + Modify panels -->
<svg width="1920" height="181" viewBox="0 0 1920 181" fill="none">
<defs>
<path id="dda" d="M-3 -1.7h6l-3 3.4z" fill="#d6d9de"/>
</defs>
<!-- Line -->
<path d="M8.5 90.5L37.5 61.5" stroke="#dcdde0" stroke-width="1.3"/>
<g fill="#8ecdf3"><rect x="6.8" y="88.8" width="3.4" height="3.4"/><rect x="35.8" y="59.8" width="3.4" height="3.4"/></g>
<!-- Polyline -->
<path d="M52 83.5H71.5A10 7.5 0 0 0 71.5 68.5" stroke="#dcdde0" stroke-width="1.3"/>
<g fill="#8ecdf3"><rect x="50.3" y="81.8" width="3.4" height="3.4"/><rect x="69.8" y="81.8" width="3.4" height="3.4"/><rect x="69.8" y="66.8" width="3.4" height="3.4"/></g>
<!-- Circle -->
<circle cx="115.5" cy="75.5" r="15.3" stroke="#dcdde0" stroke-width="1.3"/>
<path d="M115.5 75.5L123 67.5M119.5 66.8H123.8V71" stroke="#7cc4f0" stroke-width="1.2"/>
<rect x="113.8" y="73.8" width="3.4" height="3.4" fill="#8ecdf3"/>
<!-- Arc -->
<path d="M149.5 89.5C150 76 161 63.500 176.5 62.500" stroke="#dcdde0" stroke-width="1.3"/>
<g fill="#8ecdf3"><rect x="147.800" y="87.800" width="3.4" height="3.4"/><rect x="155.800" y="68.300" width="3.4" height="3.4"/><rect x="174.800" y="60.800" width="3.4" height="3.4"/></g>
<use href="#dda" x="115.500" y="114.500"/><use href="#dda" x="161.500" y="114.500"/>
<!-- rectangle tool -->
<rect x="188.500" y="64.500" width="13" height="9" stroke="#dcdde0" stroke-width="1.2"/><rect x="187.400" y="63.400" width="2.200" height="2.200" fill="#dcdde0"/><rect x="200.400" y="72.400" width="2.200" height="2.200" fill="#dcdde0"/>
<use href="#dda" x="212.500" y="69.300"/>
<!-- ellipse tool -->
<ellipse cx="194" cy="93" rx="7" ry="4.600" stroke="#dcdde0" stroke-width="1.200" stroke-dasharray="5.5 1.600"/><circle cx="194" cy="93" r="1" fill="#dcdde0"/><circle cx="201" cy="93" r="1.1" fill="#dcdde0"/>
<use href="#dda" x="212.500" y="93.300"/>
<!-- hatch tool -->
<g stroke="#dcdde0" stroke-width="1.200"><path d="M187 112H203M187 122H203M189.500 109.500V125M200.500 109.500V125"/></g>
<rect x="190.600" y="113.100" width="8.800" height="7.800" fill="#8d95a3"/>
<g stroke="#d0d3d8" stroke-width="0.800"><path d="M191 117l4-4M191 120.500l8-7.400M194.500 121l5-4.500"/></g>
<use href="#dda" x="212.500" y="117.300"/>
<!-- panel title arrows -->
<use href="#dda" x="130" y="140.800" transform="translate(130 140.800) scale(1.250) translate(-130 -140.800)"/>
<use href="#dda" x="373" y="140.800" transform="translate(373 140.800) scale(1.250) translate(-373 -140.800)"/>

<!-- Move -->
<g stroke="#e4e5e8" stroke-width="1.500"><path d="M233.500 68.500H247.500M240.500 61.500V75.500"/></g>
<g fill="#e4e5e8"><path d="M240.500 60l2.800 3.400h-5.600zM240.500 77l2.800-3.400h-5.600zM232 68.500l3.400-2.800v5.600zM249 68.500l-3.400-2.800v5.600z"/></g>
<!-- Copy -->
<g stroke="#dcdde0" stroke-width="1.200"><circle cx="236.500" cy="88.500" r="2.800"/><path d="M241.500 87H246V91.500"/><path d="M244.200 90.300L246 92.200L247.800 90.300" fill="#dcdde0"/></g>
<g stroke="#8ecdf3" stroke-width="1.200"><circle cx="240" cy="97.300" r="2.800"/><circle cx="245" cy="97.300" r="2.800"/></g>
<!-- Stretch -->
<g stroke="#dcdde0" stroke-width="1.200"><path d="M238 109.500H233.500V124.500H240M241 124.500H248.600L245 109.500H241.600V121"/><path d="M238 119.500H243.500"/><path d="M242.300 117.800L244.300 119.500L242.300 121.200" fill="#dcdde0"/></g>
<!-- Rotate -->
<path d="M317.200 64.400A6.600 6.600 0 1 0 319.400 70" stroke="#e4e5e8" stroke-width="1.400"/><path d="M314.600 61.300L319.200 63.300L316.200 67z" fill="#e4e5e8"/>
<!-- Mirror -->
<g stroke-width="1.200"><path d="M311 98.500L305.600 98.500L311 87.300z" stroke="#dcdde0"/><path d="M314 98.500L319.400 98.500L314 87.300z" stroke="#8ecdf3"/></g>
<!-- Scale -->
<g stroke="#dcdde0" stroke-width="1.200"><rect x="305.600" y="115.500" width="8.600" height="8.600"/><path d="M305.600 113V109.500H320.500V124.100H317"/></g>
<!-- Trim -->
<g stroke="#dcdde0" stroke-width="1.200"><path d="M374.500 62.700H377M378.500 62.700H381M386 62.700H390" /><path d="M378.800 64.500L385.500 73.500M386.600 64.500L381.200 72.500"/><circle cx="381.800" cy="74.600" r="1.800"/><circle cx="387" cy="73.200" r="1.800"/></g>
<use href="#dda" x="431.500" y="69.300"/>
<!-- Fillet -->
<path d="M374.600 100.500V97M374.600 95.500C374.600 89.500 378.500 85.800 383.500 85.800M385 85.800H390" stroke="#dcdde0" stroke-width="1.200"/>
<use href="#dda" x="433.500" y="93.300"/>
<!-- Array -->
<g stroke-width="1.200"><rect x="375.500" y="110.500" width="5" height="5" stroke="#dcdde0"/><rect x="383.500" y="110.500" width="5" height="5" stroke="#dcdde0"/><rect x="375.500" y="118.500" width="5" height="5" stroke="#8ecdf3"/><rect x="383.500" y="118.500" width="5" height="5" stroke="#8ecdf3"/></g>
<use href="#dda" x="433.500" y="117.300"/>
<!-- Erase -->
<path d="M451 75.500H464" stroke="#dcdde0" stroke-width="1"/>
<path d="M453.500 71.500L463 62L465.600 64.600L456 74z" fill="#f2c36b"/><path d="M463 62L465 60.600L465.600 64.600z" fill="#f6e3b0"/><path d="M452.400 72.800L454.400 70.800L456.800 73.200L454.600 75z" fill="#e84a5f"/>
<!-- Explode -->
<g stroke="#dcdde0" stroke-width="1.200"><rect x="449.500" y="89.500" width="10.500" height="9.500"/><path d="M449.500 89.500L453.500 85.500H464.500L460 89.500M464.500 85.500V95L460 99M452 92V96.500H457.500"/></g>
<!-- Offset -->
<g stroke-width="1.200"><path d="M464.500 110.500H455C450.500 110.500 449 113.600 449 117S450.500 123.500 455 123.500H464.500" stroke="#dcdde0"/><path d="M464.500 113.700H456C453.600 113.700 452.500 115 452.500 117S453.600 120.300 456 120.300H464.500" stroke="#8ecdf3"/></g>
</svg>
<!-- ribbon icons: Annotation + Layers -->
<svg width="1920" height="181" viewBox="0 0 1920 181" fill="none">
<use href="#dda" x="499.500" y="114.500"/>
<!-- Dimension -->
<g stroke="#dcdde0" stroke-width="1.200"><path d="M536.500 60.500V91.500M567.500 60.500V91.500M538.500 66.500H565.500"/><path d="M541.500 64L538.500 66.500L541.500 69M562.500 64L565.500 66.500L562.500 69"/></g>
<g stroke="#f5e254" stroke-width="1.900"><path d="M551.900 76.600V82M543.700 79.800L548.200 84.400M560.200 79.800L555.700 84.400M539.800 87.600L545.600 86.900M564 87.600L558.200 86.900"/></g>
<g fill="#2b3a66"><circle cx="548.600" cy="84.800" r="0.800"/><circle cx="555.300" cy="84.800" r="0.800"/><circle cx="551.900" cy="82.600" r="0.700"/></g>
<!-- Linear -->
<g stroke-width="1.200"><path d="M589.500 62.500V75.500M604.500 62.500V75.500" stroke="#dcdde0"/><path d="M590 67.500H604" stroke="#7cc4f0"/></g>
<use href="#dda" x="652" y="69.300"/>
<!-- Leader -->
<g stroke="#dcdde0" stroke-width="1.200"><circle cx="601.300" cy="90.200" r="3"/><path d="M598.500 91C594.500 91 593.500 95 590.500 98.500"/><path d="M589.300 95.500L589.500 99.700L593.600 99" fill="#dcdde0"/></g>
<use href="#dda" x="655" y="93.300"/>
<!-- Table -->
<g stroke="#dcdde0" stroke-width="1.100"><rect x="589.500" y="110.500" width="15" height="13"/><path d="M589.500 114.200H604.500M589.500 117.400H604.500M589.500 120.500H604.500M594.500 114.200V123.500M599.500 114.200V123.500"/></g>
<rect x="589.500" y="110.500" width="15" height="3.200" fill="#dcdde0"/>
<use href="#dda" x="603" y="140.800" transform="translate(603 140.800) scale(1.250) translate(-603 -140.800)"/>

<!-- Layer Properties big icon -->
<g>
<path d="M680 82l10-8h17l-10 8z" fill="#c9ccd2"/>
<path d="M680 75.500l10-8h17l-10 8z" fill="#d6d8dd"/>
<path d="M680 69l10-8.500h17l-10 8.500z" fill="#e3e4e8"/>
<rect x="699" y="74.500" width="13.500" height="17.500" rx="1" fill="#f1f1f3"/>
<rect x="700.700" y="76.500" width="10" height="6.500" fill="#55aaf0"/>
<path d="M702 86h7.500M707.600 84.500l2 1.500l-2 1.500M710.500 89.300h-7.500M704.900 87.800l-2 1.500l2 1.500" stroke="#c0504d" stroke-width="0.900"/>
</g>
<!-- layer dropdown icons -->
<g>
<circle cx="739" cy="67" r="5" fill="#f6c557"/><rect x="736.800" y="71.500" width="4.400" height="3.600" rx="1" fill="#f1f1f1"/>
<circle cx="757.300" cy="68.500" r="4.200" fill="#f6c557"/>
<g stroke="#e9d9a6" stroke-width="1"><path d="M757.300 61.600v1.800M757.300 73.600v1.800M750.400 68.500h1.800M762.400 68.500h1.800M752.400 63.600l1.300 1.300M760.900 72.100l1.300 1.300M752.400 73.400l1.300-1.300M760.900 64.900l1.300-1.300"/></g>
<g stroke="#dcdde0" stroke-width="1.100"><path d="M769.500 65V61.500H773M778 61.500H782.500V65M769.500 71V74.500H773"/></g>
<rect x="771.500" y="63.500" width="8.500" height="8.500" fill="#737b89" stroke="#aeb3bd" stroke-width="0.800"/>
<circle cx="780.500" cy="72.500" r="2.800" fill="#f6c557"/><g stroke="#e9d9a6" stroke-width="0.800"><path d="M780.500 68v1.200M780.500 75.800v1.200M776 72.500h1.200M783.800 72.500h1.200"/></g>
<rect x="789.500" y="68.500" width="9.500" height="7.500" fill="#f3b94a"/><path d="M796 68.500V66a2.600 2.600 0 0 1 5.200 0v1.200" stroke="#f6d27a" stroke-width="1.300"/><rect x="793.600" y="70.500" width="1.400" height="3" fill="#7a5a1c"/>
</g>
<path d="M925 67.300h8l-4 4.500z" fill="#d6d9de"/>
<!-- small layer tools row 2 -->
<g id="lyrrow2">
<path d="M737.2 85.9h6.9l-6.3 5.900h-6.900z" fill="#dcdde2"/><circle cx="743.400" cy="94.300" r="3.500" fill="#6fd3cf"/><path d="M741.600 97.600h3.600v2.400l-1.800 1.200l-1.800-1.200z" fill="#f2f2f2"/>
<path d="M759.0 91.4h9l-4.100 5.200h-9z" fill="#c8cbd2" stroke="#3b4453" stroke-width="0.700"/><path d="M759.0 88.3h9l-4.100 5.200h-9z" fill="#d2d4da" stroke="#3b4453" stroke-width="0.700"/><path d="M759.0 85.2h9l-4.100 5.200h-9z" fill="#dcdde2" stroke="#3b4453" stroke-width="0.700"/><path d="M770.800 94l-6 6M764.300 96.300v4.200h4.200" stroke="#f2f2f2" stroke-width="1.400" fill="none"/>
<path d="M785.2 85.9h6.9l-6.3 5.900h-6.900z" fill="#dcdde2"/><g stroke="#58cfcf" stroke-width="1.200"><path d="M790.500 92.500v8M787 94.500l7 4M794 94.500l-7 4"/><path d="M789.200 93.300l1.300 1.200l1.300-1.200M789.200 99.700l1.300-1.200l1.300 1.200" fill="none" stroke-width="0.800"/></g>
<path d="M809.2 85.9h6.9l-6.3 5.900h-6.900z" fill="#dcdde2"/><rect x="811.800" y="96.300" width="7" height="5.400" fill="#4fcdb6"/><path d="M813.300 96.300v-1.700a2 2 0 0 1 4 0v1.700" stroke="#4fcdb6" stroke-width="1.200" fill="none"/><rect x="814.800" y="98" width="1" height="1.800" fill="#2a5a55"/>
<path d="M831.0 94.5h9l-4.100 5.200h-9z" fill="#dcdde2" stroke="#3b4453" stroke-width="0.700"/><path d="M831.0 91.4h9l-4.100 5.200h-9z" fill="#dcdde2" stroke="#3b4453" stroke-width="0.700"/><path d="M831.0 88.3h9l-4.100 5.200h-9z" fill="#6fb2ea" stroke="#3b4453" stroke-width="0.700"/><circle cx="834.800" cy="87.300" r="3.100" fill="#dfe1e6"/>
</g>
<!-- row 3 -->
<g id="lyrrow3">
<path d="M735.0 115.4h9l-4.100 5.200h-9z" fill="#c8cbd2" stroke="#3b4453" stroke-width="0.700"/><path d="M735.0 112.3h9l-4.100 5.200h-9z" fill="#d2d4da" stroke="#3b4453" stroke-width="0.700"/><path d="M735.0 109.2h9l-4.100 5.200h-9z" fill="#dcdde2" stroke="#3b4453" stroke-width="0.700"/><circle cx="743.400" cy="118" r="3.500" fill="#f6bf6a"/><path d="M741.600 121.300h3.600v2.400l-1.800 1.200l-1.800-1.200z" fill="#f2f2f2"/>
<path d="M759.0 115.4h9l-4.100 5.200h-9z" fill="#c8cbd2" stroke="#3b4453" stroke-width="0.700"/><path d="M759.0 112.3h9l-4.100 5.200h-9z" fill="#d2d4da" stroke="#3b4453" stroke-width="0.700"/><path d="M759.0 109.2h9l-4.100 5.200h-9z" fill="#dcdde2" stroke="#3b4453" stroke-width="0.700"/><path d="M764.300 124l6-6M770.800 121.700v-4.200h-4.200" stroke="#f2f2f2" stroke-width="1.400" fill="none"/>
<path d="M783.0 115.4h9l-4.100 5.200h-9z" fill="#c8cbd2" stroke="#3b4453" stroke-width="0.700"/><path d="M783.0 112.3h9l-4.100 5.200h-9z" fill="#d2d4da" stroke="#3b4453" stroke-width="0.700"/><path d="M783.0 109.2h9l-4.100 5.200h-9z" fill="#dcdde2" stroke="#3b4453" stroke-width="0.700"/><circle cx="790.300" cy="120.300" r="2.800" fill="#f6c557"/><g stroke="#efe0a8" stroke-width="0.900"><path d="M790.300 115.600v1.200M790.300 123.800v1.200M785.600 120.300h1.200M793.800 120.300h1.200M787 117l.8.800M792.800 122.800l.8.800M787 123.600l.8-.8M792.800 117.800l.8-.8"/></g>
<path d="M809.2 109.9h6.9l-6.3 5.900h-6.900z" fill="#dcdde2"/><rect x="810" y="121" width="7" height="5" fill="#f3c95a"/><path d="M815.300 121v-2a1.900 1.900 0 0 1 3.800 0v.8" stroke="#f3c95a" stroke-width="1.200" fill="none"/><rect x="813" y="122.600" width="1" height="1.600" fill="#7a5a1c"/>
<path d="M831.0 115.4h9l-4.100 5.200h-9z" fill="#c8cbd2" stroke="#3b4453" stroke-width="0.700"/><path d="M831.0 112.3h9l-4.100 5.200h-9z" fill="#d2d4da" stroke="#3b4453" stroke-width="0.700"/><path d="M831.0 109.2h9l-4.100 5.200h-9z" fill="#dcdde2" stroke="#3b4453" stroke-width="0.700"/><path d="M834.300 120.300l3.600-3l4.200 5l-3.600 3z" fill="#f2c25a"/><path d="M838.200 117l2-2.400l1.300 1.300l1.200-1.600l1.700 1.500l-1.200 1.500l1.700 1.200l-2.600 3.300z" fill="#f4f4f4"/>
</g>
<use href="#dda" x="821" y="140.800" transform="translate(821 140.800) scale(1.250) translate(-821 -140.800)"/>
</svg>
<!-- ribbon icons: Block, Properties, Groups, Utilities, Clipboard, View -->
<svg width="1920" height="181" viewBox="0 0 1920 181" fill="none">
<!-- Insert big -->
<path d="M958.500 58.500h11l5.500 5.500v18h-16.500z" fill="#8ec9f5"/><path d="M969.500 58.500v5.500h5.500z" fill="#d8ecfb"/>
<rect x="944.500" y="68.500" width="20.500" height="14" fill="#6f7683" stroke="#dfe1e5" stroke-width="1.200"/>
<rect x="943.300" y="81.300" width="2.600" height="2.600" fill="#dfe1e5"/>
<circle cx="965" cy="83" r="7" fill="#838a96" fill-opacity="0.850" stroke="#dfe1e5" stroke-width="1.200"/>
<use href="#dda" x="959.500" y="113.500"/>
<!-- Create -->
<g><rect x="984.500" y="66.500" width="9" height="7" fill="#6f7683" stroke="#dfe1e5" stroke-width="1.100"/><rect x="983.300" y="72.800" width="2.200" height="2.200" fill="#dfe1e5"/><circle cx="993.500" cy="73.500" r="3.300" fill="#6f7683" stroke="#dfe1e5" stroke-width="1.100"/>
<path d="M995 61.200l.9 2.500l2.300-1.300l-.7 2.600l2.600.4l-2.200 1.500l1.600 2l-2.600-.2l-.2 2.600l-1.700-2l-1.700 2l-.2-2.600l-2.600.2l1.600-2l-2.200-1.500l2.600-.4l-.7-2.600l2.300 1.300z" fill="#f8d14c"/></g>
<!-- Edit -->
<g><rect x="984.500" y="90.500" width="9" height="7" fill="#6f7683" stroke="#dfe1e5" stroke-width="1.100"/><rect x="983.300" y="96.800" width="2.200" height="2.200" fill="#dfe1e5"/><circle cx="994" cy="97.500" r="3.300" fill="#6f7683" stroke="#dfe1e5" stroke-width="1.100"/>
<path d="M990.500 93.500l6-6.500l2.200 2.100l-6 6.400l-2.700.7z" fill="#f2c36b"/><path d="M995.500 88l1.300-1.400l2.200 2.100l-1.300 1.400z" fill="#e84a5f"/></g>
<!-- Edit attributes -->
<g><path d="M983.500 110.500h9l5 5.500l-7.500 8l-6.500-6.500z" fill="#eeeeef"/><path d="M986.500 113v4M986.500 113h2a1 1 0 0 1 0 2.200h-2" stroke="#3b4453" stroke-width="0.900"/><path d="M988 119.500l2 2l4-4.500" stroke="#3b4453" stroke-width="1.100"/>
<path d="M990.500 117l6-6.500l2.200 2.100l-6 6.400l-2.700.7z" fill="#f2c36b"/><path d="M995.500 111.500l1.300-1.400l2.200 2.100l-1.300 1.400z" fill="#e84a5f"/></g>
<use href="#dda" x="1089.500" y="117.300"/>
<use href="#dda" x="1036" y="140.800" transform="translate(1036 140.800) scale(1.250) translate(-1036 -140.800)"/>

<!-- Match Properties big -->
<g><rect x="1116" y="60" width="20" height="28" rx="1" fill="#e1e2e5"/><rect x="1118.500" y="62.500" width="13.500" height="10.500" fill="#7cc0f2"/>
<g stroke="#7a7f89" stroke-width="1"><path d="M1119 78.500h5M1126 78.500h6M1119 83.500h8M1129 83.500h3M1124.500 76.500v4M1127.800 81.500v4"/></g>
<path d="M1129.500 83.500l7-5.500l6 7.500l-7 5.500z" fill="#f2c25a"/><path d="M1136.500 78l3-2.500l1.500 1l1.500-2.200l2.300 1.600l-1 2.400l2.200 1.200l-3.500 5.500z" fill="#f4f4f4"/><path d="M1130.600 84.800l5.500 7" stroke="#d9a440" stroke-width="0.800"/></g>
<!-- colour wheel -->
<g><path d="M1170.800 68.900L1170.800 60.900A8 8 0 0 1 1177.700 64.900z" fill="#f6c445"/><path d="M1170.800 68.900L1177.700 64.900A8 8 0 0 1 1177.700 72.900z" fill="#f08a3c"/><path d="M1170.800 68.900L1177.700 72.900A8 8 0 0 1 1170.800 76.900z" fill="#c355c8"/><path d="M1170.800 68.900L1170.800 76.900A8 8 0 0 1 1163.900 72.900z" fill="#4f7fe8"/><path d="M1170.800 68.900L1163.900 72.900A8 8 0 0 1 1163.900 64.900z" fill="#39b8c9"/><path d="M1170.800 68.900L1163.900 64.900A8 8 0 0 1 1170.800 60.900z" fill="#62c45a"/></g>
<!-- lineweight -->
<g fill="#e6e7ea"><rect x="1163" y="85" width="16" height="1"/><rect x="1163" y="88" width="16" height="1.600"/><rect x="1163" y="92" width="16" height="2.400"/><rect x="1163" y="97" width="16" height="3.600"/></g>
<!-- linetype -->
<g stroke="#e6e7ea" stroke-width="1.100"><path d="M1163 110.500h16" stroke-dasharray="1 1"/><path d="M1163 114h16" stroke-dasharray="3 1.300"/><path d="M1163 117.500h16" stroke-dasharray="1.500 1"/><path d="M1163 121h16" stroke-dasharray="4 1.500"/><path d="M1163 124.300h16" stroke-dasharray="2 1"/></g>
<g fill="#d6d9de"><path d="M1350.500 67.300h8l-4 4.500zM1350.500 91.300h8l-4 4.500zM1350.500 115.300h8l-4 4.500z"/></g>
<use href="#dda" x="1255" y="140.800" transform="translate(1255 140.800) scale(1.250) translate(-1255 -140.800)"/>
<path d="M1353.500 138.500l4.500 4.500M1358.200 139.500v3.700h-3.700" stroke="#c8ccd3" stroke-width="1.100"/>

<!-- Group big -->
<g stroke="#e4e5e8" stroke-width="1.400"><path d="M1373 65.500h-3.500v25h3.500M1387.500 75v15.500h3.500"/></g>
<rect x="1375.500" y="69" width="9" height="6.500" fill="#3f77b0" stroke="#8ecdf3" stroke-width="1"/>
<circle cx="1380" cy="83.500" r="4.600" fill="#8d929b" stroke="#c9ccd2" stroke-width="1"/>
<path d="M1392.500 60l1.600 4.300l4-2.400l-1.400 4.500l4.600.7l-3.900 2.600l2.900 3.600l-4.600-.4l-.4 4.600l-2.800-3.700l-2.800 3.700l-.4-4.600l-4.600.4l2.900-3.600l-3.900-2.600l4.600-.7l-1.400-4.500l4 2.400z" fill="#f8d14c"/>
<!-- Ungroup -->
<g><path d="M1421 62h2.500v13.500h-2.500" stroke="#e4e5e8" stroke-width="1.100"/><rect x="1412.500" y="63.500" width="5" height="4.200" stroke="#8ecdf3" stroke-width="1"/><circle cx="1415" cy="72.500" r="2.500" fill="#8d929b"/><path d="M1420.500 66.500l5 5M1425.500 66.500l-5 5" stroke="#f0506a" stroke-width="1.500"/></g>
<!-- Group edit -->
<g><path d="M1413 85.500h-2.300v13.500h2.300M1420.500 85.500h2.300v6" stroke="#e4e5e8" stroke-width="1.100"/><rect x="1414" y="87.500" width="4.600" height="4" stroke="#8ecdf3" stroke-width="1"/><circle cx="1416.300" cy="96" r="2.400" fill="#8d929b"/>
<path d="M1418.500 98.500l5.500-6l2.200 2.100l-5.500 6l-2.700.6z" fill="#f2c36b"/><path d="M1423 93.600l1.300-1.400l2.200 2.100l-1.300 1.400z" fill="#e84a5f"/></g>
<!-- Group select (highlighted) -->
<g><path d="M1413 109.500h-2.300v13.500h2.300M1420.500 109.500h2.300v4" stroke="#e4e5e8" stroke-width="1.100"/><rect x="1413.800" y="111.300" width="5" height="4.400" fill="#4fb97f"/><circle cx="1416.300" cy="120" r="2.600" fill="#4fb97f"/>
<path d="M1419.500 113.500v11l2.600-2.300l1.800 4l1.700-.8l-1.800-3.800h3.400z" fill="#fff" stroke="#2a303b" stroke-width="0.500"/></g>
<use href="#dda" x="1420" y="140.800" transform="translate(1420 140.800) scale(1.250) translate(-1420 -140.800)"/>

<!-- Measure -->
<rect x="1455" y="72.500" width="28.500" height="6.300" fill="#f3c24f"/><g stroke="#3b4453" stroke-width="0.900"><path d="M1458.500 72.500v2.500M1461.500 72.500v2.500M1464.500 72.500v2.500M1467.500 72.500v2.500M1470.500 72.500v2.500M1473.500 72.500v2.500M1476.500 72.500v2.500M1479.500 72.500v2.500"/></g>
<use href="#dda" x="1468.600" y="114.500"/>
<!-- quick select -->
<g><path d="M1515.500 62l-3 3.500h2l-1.500 3l4-4h-2.200l2-2.500z" fill="#f8d14c"/><rect x="1513.500" y="70" width="9" height="7.500" fill="#dce9f6"/><path d="M1515 72h1M1517 72h4M1515 74h1M1517 74h4M1515 76h1M1517 76h4" stroke="#4f88c4" stroke-width="0.900"/><path d="M1507.500 65.500v10.500l2.500-2.200l1.800 3.800l1.600-.8l-1.800-3.600h3.200z" fill="#fff" stroke="#2a303b" stroke-width="0.500"/></g>
<!-- select all -->
<g><rect x="1507.500" y="85.500" width="13.500" height="13.500" stroke="#4fc98f" stroke-width="1.100" stroke-dasharray="2 1.200" fill="#2f5e50"/><path d="M1510 88.500h5v5h4v3.500h-9z" fill="#57c790"/><path d="M1515.500 90.500v10.500l2.500-2.200l1.800 3.800l1.600-.8l-1.800-3.600h3.200z" fill="#fff" stroke="#2a303b" stroke-width="0.500"/></g>
<!-- calculator -->
<g><rect x="1509" y="109" width="12" height="15.500" fill="#d9dbe0"/><rect x="1510.800" y="110.800" width="8.400" height="2.600" fill="#5b6270"/><g fill="#5b6270"><rect x="1510.800" y="115" width="2" height="2"/><rect x="1514" y="115" width="2" height="2"/><rect x="1517.200" y="115" width="2" height="2"/><rect x="1510.800" y="118.200" width="2" height="2"/><rect x="1514" y="118.200" width="2" height="2"/><rect x="1517.200" y="118.200" width="2" height="2"/><rect x="1510.800" y="121.400" width="2" height="2"/><rect x="1514" y="121.400" width="2" height="2"/><rect x="1517.200" y="121.400" width="2" height="2"/></g></g>
<use href="#dda" x="1503" y="140.800" transform="translate(1503 140.800) scale(1.250) translate(-1503 -140.800)"/>

<!-- Paste -->
<g><rect x="1543.600" y="63" width="22" height="25" rx="1" fill="#e2a455"/><rect x="1551.500" y="60" width="7" height="4.500" rx="1" fill="#e8e8ea"/><rect x="1549" y="62.500" width="12" height="3" fill="#e8e8ea"/><path d="M1552.500 69.500h12l5.500 5.500v17h-17.500z" fill="#e4e5e8"/><path d="M1564.500 69.500v5.500h5.500z" fill="#3b4453"/><path d="M1564.500 69.500v5.500h5.500z" fill="#fafafa" fill-opacity="0.900"/></g>
<use href="#dda" x="1557.500" y="114.500"/>
<!-- Cut -->
<g><rect x="1587" y="61" width="12" height="13.500" fill="#d3d5da"/><path d="M1589 64h8M1589 67h6M1589 70h4" stroke="#5b6270" stroke-width="1"/><path d="M1594 66l8 9M1602 66l-7.500 9" stroke="#f4f4f4" stroke-width="1.100"/><circle cx="1595.300" cy="75.800" r="1.700" stroke="#f4f4f4" stroke-width="1"/><circle cx="1601.300" cy="75.800" r="1.700" stroke="#f4f4f4" stroke-width="1"/></g>
<use href="#dda" x="1610.500" y="69.300"/>
<!-- Copy clip -->
<g><path d="M1588 85.500h6l2.500 2.500v9h-8.500z" fill="#c3c6cc"/><path d="M1591.500 88.500h6.500l3.500 3.500v9h-10z" fill="#e4e5e8" stroke="#3b4453" stroke-width="0.700"/></g>
<use href="#dda" x="1610.500" y="93.300"/>
<!-- Base -->
<path d="M1636 64h13.500v10h18.500v14h-32z" fill="#e2e3e6"/>
<use href="#dda" x="1652" y="114.500"/>
<use href="#dda" x="1660" y="140.800" transform="translate(1660 140.800) scale(1.250) translate(-1660 -140.800)"/>
<path d="M1671.500 138.500l4.500 4.500M1676.200 139.500v3.700h-3.700" stroke="#c8ccd3" stroke-width="1.100"/>
</svg>
<!-- status bar + taskbar icons -->
<svg width="1920" height="1080" viewBox="0 0 1920 1080" fill="none">
<!-- ortho -->
<path d="M1507.500 1018v14.500h12M1507.500 1027.500h5v5" stroke="#f4f6fa" stroke-width="1.300"/>
<!-- polar -->
<g stroke="#e4e5e8" stroke-width="1.200"><circle cx="1536" cy="1026" r="6.200"/><path d="M1536 1026h10M1536 1026l7-7.500"/></g>
<path d="M1553.500 1023.500h7l-3.500 4z" fill="#d6d9de"/>
<!-- isodraft -->
<path d="M1577 1016v18" stroke="#e4e5e8" stroke-width="1.200"/><path d="M1572 1019l10 13" stroke="#e0505a" stroke-width="1.200"/><path d="M1582 1019l-10 13" stroke="#4fc98f" stroke-width="1.200"/><circle cx="1577" cy="1025.500" r="1.300" fill="#2a303b" stroke="#e4e5e8" stroke-width="0.800"/>
<path d="M1593.500 1023.500h7l-3.500 4z" fill="#d6d9de"/>
<!-- snap tracking -->
<path d="M1610.500 1031.500h14M1611.500 1031l12.500-12.500" stroke="#f4f6fa" stroke-width="1.300"/><rect x="1616" y="1023.500" width="3" height="3" fill="#f4f6fa"/>
<!-- object snap -->
<rect x="1635.500" y="1020.500" width="11.500" height="11.500" stroke="#f4f6fa" stroke-width="1.300"/><rect x="1633.800" y="1018.800" width="3.600" height="3.600" fill="#5b8fd2" stroke="#f4f6fa" stroke-width="1"/>
<path d="M1658.500 1023.500h7l-3.500 4z" fill="#d6d9de"/>
<!-- annotation scale icons -->
<g stroke="#e4e5e8" stroke-width="1.200"><path d="M1679 1023v-4.500h4.500M1686 1018.500h2M1690.500 1018.500h1.500v2M1692 1023v2M1692 1028v3.500h-2M1687 1031.500h-2M1682.500 1031.500h-3.500v-2"/><rect x="1683.500" y="1023.500" width="5.500" height="5.500"/><path d="M1679.500 1019l4 4"/></g>
<g fill="#e4e5e8"><path d="M1709 1017.500l2.200 8l4.300 6.500l-6.500-4.500l-6.500 4.500l4.300-6.500z"/><path d="M1733 1017.500l2.200 8l4.300 6.500l-6.500-4.500l-6.500 4.500l4.300-6.500z"/></g>
<circle cx="1715" cy="1019.800" r="1.900" stroke="#e4e5e8" stroke-width="1"/>
<path d="M1739 1016.500l.8 2.200l2.200.8l-2.200.8l-.8 2.200l-.8-2.200l-2.200-.8l2.200-.8z" fill="#e4e5e8"/>
<!-- gear -->
<g transform="translate(1759.500 1024.500)"><g fill="#e4e5e8"><circle r="5.200"/><g id="gt"><rect x="-1.500" y="-7.600" width="3" height="15.200"/></g><use href="#gt" transform="rotate(45)"/><use href="#gt" transform="rotate(90)"/><use href="#gt" transform="rotate(135)"/></g><circle r="2.300" fill="#3b4453"/></g>
<path d="M1776.500 1023.500h7l-3.500 4z" fill="#d6d9de"/>
<!-- plus -->
<path d="M1794 1025h15M1801.500 1017.500v15" stroke="#f0f0f0" stroke-width="1.600"/>
<!-- isolate -->
<g stroke="#e4e5e8" stroke-width="1.100"><rect x="1821.500" y="1017.500" width="5" height="5"/><circle cx="1834" cy="1024" r="2.600"/><path d="M1827 1027.500l3.300 5h-6.600z"/></g>
<!-- graphics performance -->
<g><path d="M1850.500 1016v6M1847 1019.500h11M1858 1019.500v6" stroke="#4fb2ee" stroke-width="1.200"/><rect x="1848.500" y="1017.600" width="3.600" height="3.600" fill="#3b4453" stroke="#4fb2ee" stroke-width="1"/><rect x="1847" y="1025" width="7.500" height="6.500" fill="#f0b62e"/><path d="M1853 1028.500l3 3l5.500-6.500" stroke="#4fc95a" stroke-width="1.800"/></g>
<!-- clean screen -->
<g stroke="#e4e5e8" stroke-width="1.100"><rect x="1873.500" y="1019.500" width="13" height="10"/><path d="M1876 1027l2.500-2.500M1876 1024.800v2.200h2.200M1884 1022l-2.500 2.500M1884 1024.200v-2.200h-2.200"/></g>
<!-- customization -->
<path d="M1899 1020h15M1899 1025h15M1899 1030h15" stroke="#f0f0f0" stroke-width="1.600"/>

<!-- taskbar: windows logo -->
<g fill="#fff"><path d="M16 1054.300l6.500-.9v6.300H16zM23.500 1053.200l8.500-1.200v7.700h-8.500zM16 1060.700h6.500v6.300l-6.500-.9zM23.500 1060.700H32v7.700l-8.500-1.200z"/></g>
<!-- search glass -->
<g stroke="#1a1a1a" stroke-width="1.400"><circle cx="70.500" cy="1056.500" r="5.300"/><path d="M66.600 1060.400l-6.300 6.300"/></g>
<!-- search highlight illustration -->
<g>
<defs><linearGradient id="skyG" x1="0" y1="0" x2="0.300" y2="1"><stop offset="0" stop-color="#cfa0cf"/><stop offset="0.400" stop-color="#eeb0a8"/><stop offset="0.750" stop-color="#f8cf95"/><stop offset="1" stop-color="#f4e3b4"/></linearGradient>
<clipPath id="cloudC"><path d="M259 1068c-1-7 2-12 6-14c0-6 5-10 11-9c3-4 10-5 14-2c5-4 14-4 18 1c6-2 12 1 14 6c6 1 10 6 10 13c1 6-1 11-4 17h-64c-4-3-5-7-5-12z"/></clipPath></defs>
<g clip-path="url(#cloudC)">
<rect x="255" y="1040" width="82" height="40" fill="url(#skyG)"/>
<path d="M296 1072l8-13l4 4l5-10l7 9l4-4l6 14z" fill="#7f7fb8"/><path d="M309.500 1053l3.500 5l-3 1l-2 4z" fill="#c9c6e4"/>
<g fill="#7d8aae"><rect x="286" y="1063" width="4" height="10"/><rect x="290.500" y="1059" width="4.500" height="14"/><rect x="295.500" y="1056" width="3.500" height="17"/><rect x="299.500" y="1061" width="4" height="12"/><rect x="304" y="1064" width="5" height="9"/><rect x="318" y="1062" width="3" height="10"/><rect x="321.500" y="1065" width="3" height="8"/><rect x="265" y="1066" width="3" height="8"/><rect x="268.500" y="1064" width="3" height="10"/></g>
<rect x="255" y="1072" width="82" height="8" fill="#d9e2ea"/><rect x="255" y="1075" width="82" height="5" fill="#f1cfc4" opacity="0.600"/>
<path d="M276.300 1040.500v6" stroke="#4a5070" stroke-width="0.700"/><path d="M271.300 1048.600q5-2.600 10.400 0l-1.800 2.400h-6.800z" fill="#56608a"/><path d="M275.300 1051l-1.100 21h4.400l-1.100-21z" fill="#6f7aa4"/>
<ellipse cx="278.500" cy="1075.500" rx="8.500" ry="6" fill="#3f9b4f"/><ellipse cx="285" cy="1078" rx="6" ry="4" fill="#2f7f40"/><ellipse cx="322.500" cy="1070.500" rx="9" ry="4.800" fill="#4aa65a"/><ellipse cx="328" cy="1071.500" rx="4" ry="3.500" fill="#1f6a5a"/>
</g>
</g>
<!-- chrome -->
<g><circle cx="363" cy="1060" r="12" fill="#fff"/>
<path d="M363 1060L352.600 1054A12 12 0 0 1 373.400 1054z" fill="#ea4335"/>
<path d="M363 1048A12 12 0 0 1 373.400 1054H363z" fill="#ea4335"/>
<path d="M373.400 1054A12 12 0 0 1 363 1072L368.200 1063z" fill="#fbbc04"/>
<path d="M352.600 1054A12 12 0 0 0 363 1072L368.200 1063L357.800 1063z" fill="#34a853"/>
<path d="M352.600 1054L357.800 1063L363 1060L363 1054z" fill="#ea4335"/>
<path d="M363 1054H373.400L368.200 1063z" fill="#fbbc04"/>
<circle cx="363" cy="1060" r="5.600" fill="#fff"/><circle cx="363" cy="1060" r="4.400" fill="#4285f4"/></g>
<!-- autocad task icon -->
<g transform="translate(412 1060.300) scale(0.920) translate(-412 -1059)"><path d="M401.500 1049l2-2.500l18-1l1.500 2.500v20l-2 2.500l-18 .500l-1.500-2.500z" fill="#a50d2f"/><path d="M403.500 1046.500l18-1l1.500 18l-18 1.500z" fill="#e2164a"/><path d="M404.500 1065l18-1.500v6l-2 2.500l-16 .500z" fill="#7d0a24"/>
<text x="407.300" y="1060.500" font-family="Liberation Sans, sans-serif" font-weight="bold" font-size="13.500" fill="#fff">A</text>
<text x="406.800" y="1070.600" font-family="Liberation Sans, sans-serif" font-weight="bold" font-size="5.500" fill="#fff">CAD</text></g>
<!-- tray -->
<path d="M1759 1063l6-6l6 6" stroke="#fff" stroke-width="1.300"/>
<g stroke="#fff" stroke-width="1.100"><path d="M1782.500 1057.500h2.500l3.500-3.500v11l-3.500-3.500h-2.500z"/><path d="M1791 1056.500q2 3 0 6"/><path d="M1793.500 1054.500q3.200 5 0 10" opacity="0.600"/><path d="M1796 1052.500q4.400 7 0 14" opacity="0.350"/></g>
<path d="M1880.500 1052.500h14.500v11h-4.500l-2.800 3l-2.700-3h-4.500z" stroke="#fff" stroke-width="1.200"/>
</svg>
<div id="texts">
<span class="t" style="left:338.0px;top:8.3px;transform:scaleX(0.906);transform-origin:0 0;">Share</span>
<span class="t" style="left:689.0px;top:8.3px;letter-spacing:-0.14px;">Autodesk AutoCAD 2024</span>
<span class="t" style="left:832.0px;top:8.3px;letter-spacing:-0.21px;">makyaj masası.dwg</span>
<span class="t" style="left:1269.0px;top:8.2px;font-size:11px;letter-spacing:-0.25px;color:#c9ced8;font-style:italic;">Type a keyword or phrase</span>
<span class="t" style="left:1494.7px;top:8.1px;font-size:12.5px;letter-spacing:-0.10px;">mimarlucky</span>
<span class="t" style="left:13.0px;top:35.9px;letter-spacing:0.33px;color:#ffffff;">Home</span>
<span class="t" style="left:66.0px;top:35.9px;letter-spacing:-0.20px;color:#d9dde4;">Insert</span>
<span class="t" style="left:115.0px;top:35.9px;letter-spacing:0.14px;color:#d9dde4;">Annotate</span>
<span class="t" style="left:184.0px;top:35.9px;letter-spacing:-0.22px;color:#d9dde4;">Parametric</span>
<span class="t" style="left:261.0px;top:35.9px;letter-spacing:-0.26px;color:#d9dde4;">View</span>
<span class="t" style="left:306.0px;top:35.9px;letter-spacing:-0.07px;color:#d9dde4;">Manage</span>
<span class="t" style="left:369.0px;top:35.9px;letter-spacing:0.40px;color:#d9dde4;">Output</span>
<span class="t" style="left:427.0px;top:35.9px;letter-spacing:0.22px;color:#d9dde4;">Add-ins</span>
<span class="t" style="left:489.0px;top:35.9px;letter-spacing:-0.04px;color:#d9dde4;">Collaborate</span>
<span class="t" style="left:570.0px;top:35.9px;letter-spacing:-0.46px;color:#d9dde4;">Express Tools</span>
<span class="t" style="left:659.0px;top:35.9px;letter-spacing:-0.17px;color:#d9dde4;">Featured Apps</span>
<span class="t" style="left:755.0px;top:35.9px;color:#ffffff;">Layout</span>
<span class="t" style="left:12.0px;top:96.8px;letter-spacing:-0.23px;">Line</span>
<span class="t" style="left:45.5px;top:96.8px;letter-spacing:-0.07px;">Polyline</span>
<span class="t" style="left:101.0px;top:96.8px;letter-spacing:-0.13px;">Circle</span>
<span class="t" style="left:153.0px;top:96.8px;">Arc</span>
<span class="t" style="left:93.5px;top:135.1px;letter-spacing:-0.50px;">Draw</span>
<span class="t" style="left:254.5px;top:62.8px;letter-spacing:0.05px;">Move</span>
<span class="t" style="left:254.5px;top:86.8px;letter-spacing:-0.17px;">Copy</span>
<span class="t" style="left:254.5px;top:110.8px;letter-spacing:-0.25px;">Stretch</span>
<span class="t" style="left:326.6px;top:62.8px;letter-spacing:-0.39px;">Rotate</span>
<span class="t" style="left:326.6px;top:86.8px;letter-spacing:0.21px;">Mirror</span>
<span class="t" style="left:326.6px;top:110.8px;transform:scaleX(0.879);transform-origin:0 0;">Scale</span>
<span class="t" style="left:395.6px;top:62.8px;letter-spacing:-0.38px;">Trim</span>
<span class="t" style="left:395.6px;top:86.8px;letter-spacing:-0.19px;">Fillet</span>
<span class="t" style="left:395.6px;top:110.8px;letter-spacing:-0.32px;">Array</span>
<span class="t" style="left:325.5px;top:135.1px;letter-spacing:0.43px;">Modify</span>
<span class="t" style="left:487.0px;top:57.0px;font-size:39px;color:#e4e4e4;-webkit-text-stroke:0.7px #e4e4e4;">A</span>
<span class="t" style="left:490.0px;top:96.8px;transform:scaleX(0.909);transform-origin:0 0;">Text</span>
<span class="t" style="left:524.0px;top:96.8px;letter-spacing:0.04px;">Dimension</span>
<span class="t" style="left:610.0px;top:62.8px;letter-spacing:-0.27px;">Linear</span>
<span class="t" style="left:610.0px;top:86.8px;letter-spacing:-0.47px;">Leader</span>
<span class="t" style="left:610.0px;top:110.8px;letter-spacing:-0.42px;">Table</span>
<span class="t" style="left:533.0px;top:135.1px;letter-spacing:0.18px;">Annotation</span>
<span class="t" style="left:683.0px;top:96.8px;letter-spacing:-0.50px;">Layer</span>
<span class="t" style="left:670.0px;top:111.5px;letter-spacing:-0.19px;">Properties</span>
<span class="t" style="left:828.0px;top:62.8px;">0</span>
<span class="t" style="left:848.0px;top:86.8px;letter-spacing:-0.06px;">Make Current</span>
<span class="t" style="left:848.0px;top:110.8px;letter-spacing:-0.10px;">Match Layer</span>
<span class="t" style="left:778.4px;top:135.1px;transform:scaleX(0.905);transform-origin:0 0;">Layers</span>
<span class="t" style="left:945.0px;top:96.3px;letter-spacing:-0.20px;">Insert</span>
<span class="t" style="left:1004.5px;top:62.8px;letter-spacing:-0.50px;">Create</span>
<span class="t" style="left:1004.5px;top:86.8px;letter-spacing:-0.39px;">Edit</span>
<span class="t" style="left:1004.5px;top:110.8px;letter-spacing:0.03px;">Edit Attributes</span>
<span class="t" style="left:997.5px;top:135.1px;letter-spacing:-0.21px;">Block</span>
<span class="t" style="left:1114.5px;top:96.8px;letter-spacing:0.08px;">Match</span>
<span class="t" style="left:1104.0px;top:111.5px;letter-spacing:-0.19px;">Properties</span>
<span class="t" style="left:1208.0px;top:62.8px;letter-spacing:-0.50px;">ByLayer</span>
<span class="t" style="left:1254.0px;top:86.8px;letter-spacing:-0.50px;">ByLayer</span>
<span class="t" style="left:1254.0px;top:110.8px;letter-spacing:-0.50px;">ByLayer</span>
<span class="t" style="left:1192.0px;top:135.1px;letter-spacing:-0.19px;">Properties</span>
<span class="t" style="left:1369.5px;top:96.8px;letter-spacing:-0.21px;">Group</span>
<span class="t" style="left:1372.0px;top:135.1px;letter-spacing:-0.27px;">Groups</span>
<span class="t" style="left:1446.0px;top:96.8px;letter-spacing:-0.28px;">Measure</span>
<span class="t" style="left:1454.6px;top:135.1px;letter-spacing:-0.03px;">Utilities</span>
<span class="t" style="left:1543.6px;top:96.8px;transform:scaleX(0.893);transform-origin:0 0;">Paste</span>
<span class="t" style="left:1549.5px;top:135.1px;letter-spacing:0.02px;">Clipboard</span>
<span class="t" style="left:1640.5px;top:96.8px;transform:scaleX(0.859);transform-origin:0 0;">Base</span>
<span class="t" style="left:1626.0px;top:135.1px;transform:scaleX(0.931);transform-origin:0 0;">View</span>
<span class="t" style="left:58.0px;top:159.6px;letter-spacing:-0.34px;">Start</span>
<span class="t b" style="left:106.5px;top:159.6px;letter-spacing:-0.49px;color:#ffffff;">makyaj masası*</span>
<span class="t" style="left:225.0px;top:159.6px;letter-spacing:-0.03px;">aynalı dolap*</span>
<span class="t" style="left:58.0px;top:1018.2px;letter-spacing:0.33px;">Model</span>
<span class="t b" style="left:116.0px;top:1018.2px;letter-spacing:-0.50px;color:#ffffff;">Layout1</span>
<span class="t" style="left:1461.0px;top:1018.8px;transform:scaleX(0.854);transform-origin:0 0;">PAPER</span>
<span class="t" style="left:88.0px;top:1052.7px;font-size:15.5px;color:#1a1a1a;transform:scaleX(0.912);transform-origin:0 0;">Ara</span>
<span class="t" style="left:1820.0px;top:1044.8px;color:#ffffff;transform:scaleX(0.899);transform-origin:0 0;">13:02</span>
<span class="t" style="left:1810.0px;top:1062.8px;color:#ffffff;transform:scaleX(0.899);transform-origin:0 0;">8.04.2026</span>
</div>
</body>
</html>
